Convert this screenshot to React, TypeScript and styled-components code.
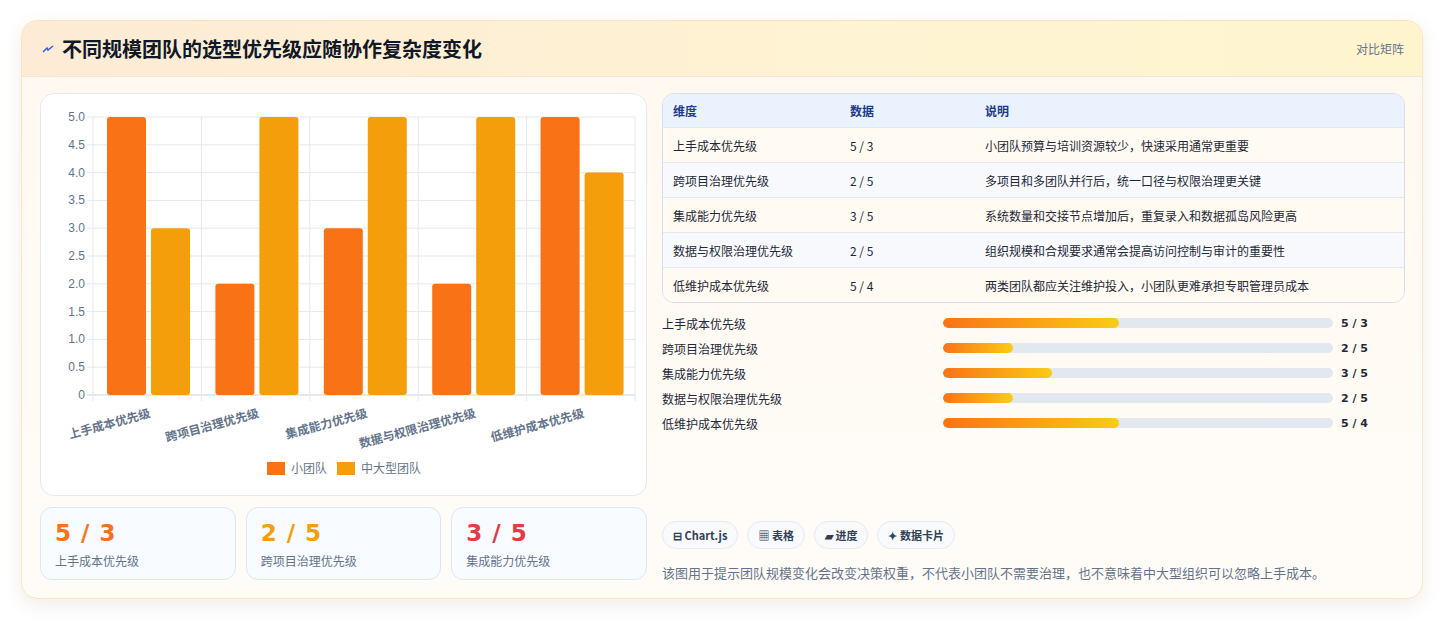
import React from "react";
import styled, { createGlobalStyle } from "styled-components";

const Global = createGlobalStyle`
  body { margin: 0; background: #f3f4f6; font-family: "Noto Sans CJK SC", "Noto Sans", sans-serif; }
`;

const Page = styled.div`
  width: 1444px; height: 621px; background: #fff; padding: 20px 21px 0; box-sizing: border-box;
`;
const Card = styled.div`
  width: 1402px; height: 579px; box-sizing: border-box; border: 1px solid #fbe3c4; border-radius: 16px;
  background: linear-gradient(180deg, #fff8ef 0%, #fffcf8 100%);
  box-shadow: 0 6px 18px rgba(148, 108, 60, 0.12); overflow: hidden; display: flex; flex-direction: column;
`;
const Header = styled.div`
  height: 55px; flex: none; display: flex; align-items: center; justify-content: space-between;
  padding: 0 18px 0 20px; border-bottom: 1px solid #f1e6d6;
  background: linear-gradient(90deg, #fdebd6 0%, #fef3d2 60%, #fef5cf 100%);
`;
const Title = styled.h1`
  margin: 0; display: flex; align-items: center; gap: 8px; font-size: 20px; font-weight: 700; color: #111827;
`;
const Tag = styled.span` font-size: 12px; color: #64748b; `;
const Body = styled.div`
  flex: 1; display: grid; grid-template-columns: 607px 743px; gap: 15px; padding: 16px 18px 0 18px;
`;
const Col = styled.div` display: flex; flex-direction: column; `;
const ChartCard = styled.div`
  height: 403px; box-sizing: border-box; background: #fff; border: 1px solid #e5e9f0; border-radius: 14px;
`;
const Stats = styled.div` display: grid; grid-template-columns: repeat(3, 1fr); gap: 10px; margin-top: 11px; `;
const Stat = styled.div`
  height: 73px; box-sizing: border-box; border: 1px solid #dbe6f3; border-radius: 12px; background: #f8fbff;
  padding: 10px 14px;
`;
const StatVal = styled.div<{ c: string }>`
  font-family: "DejaVu Sans", sans-serif; font-weight: 700; font-size: 23px; color: ${p => p.c}; line-height: 30px; letter-spacing: 1px;
`;
const StatLabel = styled.div` font-size: 12px; color: #64748b; margin-top: 4px; `;
const Table = styled.div`
  border: 1px solid #d5deea; border-radius: 12px; overflow: hidden; background: #fff;
`;
const Row = styled.div<{ head?: boolean; alt?: boolean }>`
  display: grid; grid-template-columns: 177px 135px 1fr; padding-left: 10px; align-items: center; box-sizing: border-box;
  height: ${p => (p.head ? 33 : 35)}px; font-size: 12px;
  background: ${p => (p.head ? "#eaf3fd" : p.alt ? "#f7f9fc" : "#fffaf2")};
  color: ${p => (p.head ? "#1e3a8a" : "#1f2937")}; font-weight: ${p => (p.head ? 700 : 400)};
  border-top: ${p => (p.head ? "none" : "1px solid #e3e8ef")};
`;
const Bars = styled.div` display: flex; flex-direction: column; gap: 7px; margin-top: 11px; `;
const BarRow = styled.div`
  display: grid; grid-template-columns: 273px 390px 1fr; column-gap: 8px; align-items: center; height: 18px; font-size: 12px; color: #1f2937;
`;
const Track = styled.div` height: 10px; border-radius: 5px; background: #e2e8f0; overflow: hidden; `;
const Fill = styled.div` height: 100%; border-radius: 5px; background: linear-gradient(90deg, #f97316, #facc15); `;
const BarVal = styled.span` font-family: "DejaVu Sans", sans-serif; font-weight: 700; font-size: 11px; color: #1f2937; `;
const Chips = styled.div` display: flex; gap: 9px; margin-top: auto; `;
const Chip = styled.span`
  height: 28px; box-sizing: border-box; padding: 0 10px; border: 1px solid #e5e9f0; border-radius: 14px; background: #f8fafc;
  display: inline-flex; align-items: center; gap: 3px; font-size: 11px; font-weight: 700; color: #334155;
`;
const Note = styled.p` margin: 14px 0 16px; font-size: 13px; color: #64748b; `;

const cats = ["上手成本优先级", "跨项目治理优先级", "集成能力优先级", "数据与权限治理优先级", "低维护成本优先级"];
const small = [5, 2, 3, 2, 5];
const large = [3, 5, 5, 5, 4];
const desc = [
  "小团队预算与培训资源较少，快速采用通常更重要",
  "多项目和多团队并行后，统一口径与权限治理更关键",
  "系统数量和交接节点增加后，重复录入和数据孤岛风险更高",
  "组织规模和合规要求通常会提高访问控制与审计的重要性",
  "两类团队都应关注维护投入，小团队更难承担专职管理员成本",
];
const fills = [45, 18, 28, 18, 45];

const Chart = () => {
  const L = 52, R = 594, T = 23, B = 301, cw = (R - L) / 5, h = B - T;
  const y = (v: number) => B - (v / 5) * h;
  return (
    <svg width="605" height="401" style={{ display: "block" }}>
      {Array.from({ length: 11 }).map((_, i) => {
        const v = i * 0.5;
        return (
          <g key={i}>
            <line x1={L - 6} x2={R} y1={y(v)} y2={y(v)} stroke={i === 0 ? "#cbd5e1" : "#e5e7eb"} />
            <text x={L - 8} y={y(v) + 4} textAnchor="end" fontSize="12" fill="#64748b" fontFamily="Liberation Sans, sans-serif">
              {i === 0 ? "0" : v.toFixed(1)}
            </text>
          </g>
        );
      })}
      {Array.from({ length: 6 }).map((_, i) => (
        <line key={i} x1={L + i * cw} x2={L + i * cw} y1={T} y2={B + 6} stroke="#e5e7eb" />
      ))}
      {cats.map((c, i) => {
        const x0 = L + i * cw;
        return (
          <g key={c}>
            <rect x={x0 + 14} y={y(small[i])} width={39} height={B - y(small[i])} rx={3} fill="#f97316" />
            <rect x={x0 + 58} y={y(large[i])} width={39} height={B - y(large[i])} rx={3} fill="#f59e0b" />
            <text x={x0 + cw / 2 + 4} y={B + 22} textAnchor="end" fontSize="12" fontWeight="700" fill="#64748b"
              transform={`rotate(-15 ${x0 + cw / 2 + 4} ${B + 22})`}>{c}</text>
          </g>
        );
      })}
      <rect x={226} y={368} width={18} height={13} fill="#f97316" />
      <text x={250} y={379} fontSize="12" fill="#64748b">小团队</text>
      <rect x={296} y={368} width={18} height={13} fill="#f59e0b" />
      <text x={320} y={379} fontSize="12" fill="#64748b">中大型团队</text>
    </svg>
  );
};

export default function App() {
  return (
    <Page>
      <Global />
      <Card>
        <Header>
          <Title>
            <svg width="12" height="12" viewBox="0 0 12 12"><path d="M1 9 L5 5 L6 7 L11 3" stroke="#3b5bdb" strokeWidth="1.5" fill="none" /></svg>
            不同规模团队的选型优先级应随协作复杂度变化
          </Title>
          <Tag>对比矩阵</Tag>
        </Header>
        <Body>
          <Col>
            <ChartCard><Chart /></ChartCard>
            <Stats>
              <Stat><StatVal c="#f97316">5 / 3</StatVal><StatLabel>上手成本优先级</StatLabel></Stat>
              <Stat><StatVal c="#f59e0b">2 / 5</StatVal><StatLabel>跨项目治理优先级</StatLabel></Stat>
              <Stat><StatVal c="#e23b45">3 / 5</StatVal><StatLabel>集成能力优先级</StatLabel></Stat>
            </Stats>
          </Col>
          <Col>
            <Table>
              <Row head><span>维度</span><span>数据</span><span>说明</span></Row>
              {cats.map((c, i) => (
                <Row key={c} alt={i % 2 === 1}><span>{c}</span><span>{small[i]} / {large[i]}</span><span>{desc[i]}</span></Row>
              ))}
            </Table>
            <Bars>
              {cats.map((c, i) => (
                <BarRow key={c}>
                  <span>{c}</span>
                  <Track><Fill style={{ width: `${fills[i]}%` }} /></Track>
                  <BarVal>{small[i]} / {large[i]}</BarVal>
                </BarRow>
              ))}
            </Bars>
            <Chips>
              <Chip>⊟ Chart.js</Chip>
              <Chip>▦ 表格</Chip>
              <Chip>▰ 进度</Chip>
              <Chip>✦ 数据卡片</Chip>
            </Chips>
            <Note>该图用于提示团队规模变化会改变决策权重，不代表小团队不需要治理，也不意味着中大型组织可以忽略上手成本。</Note>
          </Col>
        </Body>
      </Card>
    </Page>
  );
}
